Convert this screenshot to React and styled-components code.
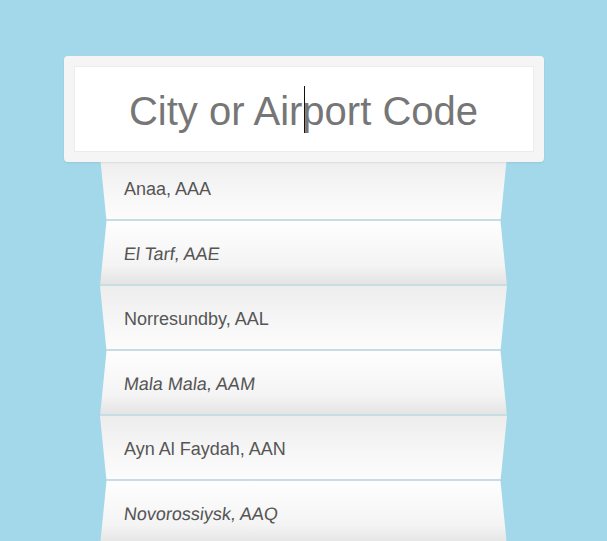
import React from "react";
import styled, { createGlobalStyle, css } from "styled-components";

const GlobalStyle = createGlobalStyle`
  html, body {
    margin: 0;
    padding: 0;
    background: #a2d8e9;
    font-family: "Liberation Sans", Arial, sans-serif;
  }
`;

const Page = styled.div`
  display: flex;
  flex-direction: column;
  align-items: center;
  box-sizing: border-box;
  padding-top: 56px;
  width: 607px;
  height: 541px;
  overflow: hidden;
`;

const SearchCard = styled.div`
  position: relative;
  z-index: 2;
  width: 480px;
  box-sizing: border-box;
  padding: 10px;
  background: #f5f5f5;
  border-radius: 4px;
  box-shadow: 0 1px 2px rgba(0, 0, 0, 0.08);
`;

const Field = styled.div`
  position: relative;
  height: 86px;
  box-sizing: border-box;
  border: 1px solid #ececec;
  background: #fff;
  display: flex;
  align-items: center;
  justify-content: center;
  padding-top: 4px;
`;

const Placeholder = styled.span`
  font-size: 40px;
  color: #767676;
`;

const Caret = styled.span`
  position: absolute;
  left: 229px;
  top: 19px;
  width: 1px;
  height: 47px;
  background: #111;
`;

const List = styled.div`
  display: flex;
  flex-direction: column;
  flex-shrink: 0;
  width: 407px;
  margin-top: -6px;
`;

const Row = styled.div`
  flex-shrink: 0;
  height: 65px;
  box-sizing: border-box;
  display: flex;
  align-items: center;
  padding: 3px 0 0 24px;
  border-bottom: 2px solid #c6dde4;
  ${(p) =>
    p.fold === "in"
      ? css`
          background: linear-gradient(to bottom, #ededed, #f7f7f7 60%, #fcfcfc);
          clip-path: polygon(0 0, 100% 0, calc(100% - 6.5px) 100%, 6.5px 100%);
        `
      : css`
          background: linear-gradient(to bottom, #fefefe, #f4f4f4 70%, #e4e4e4);
          clip-path: polygon(6.5px 0, calc(100% - 6.5px) 0, 100% 100%, 0 100%);
        `}
`;

const Label = styled.span`
  font-size: 18px;
  color: #555;
  display: inline-block;
  transform: ${(p) => (p.fold === "out" ? "skewX(-7deg)" : "none")};
`;

const airports = [
  "Anaa, AAA",
  "El Tarf, AAE",
  "Norresundby, AAL",
  "Mala Mala, AAM",
  "Ayn Al Faydah, AAN",
  "Novorossiysk, AAQ",
];

export default function App() {
  return (
    <>
      <GlobalStyle />
      <Page>
        <SearchCard>
          <Field>
            <Placeholder>City or Airport Code</Placeholder>
            <Caret />
          </Field>
        </SearchCard>
        <List>
          {airports.map((name, i) => {
            const fold = i % 2 === 0 ? "in" : "out";
            return (
              <Row fold={fold} key={name}>
                <Label fold={fold}>{name}</Label>
              </Row>
            );
          })}
        </List>
      </Page>
    </>
  );
}
